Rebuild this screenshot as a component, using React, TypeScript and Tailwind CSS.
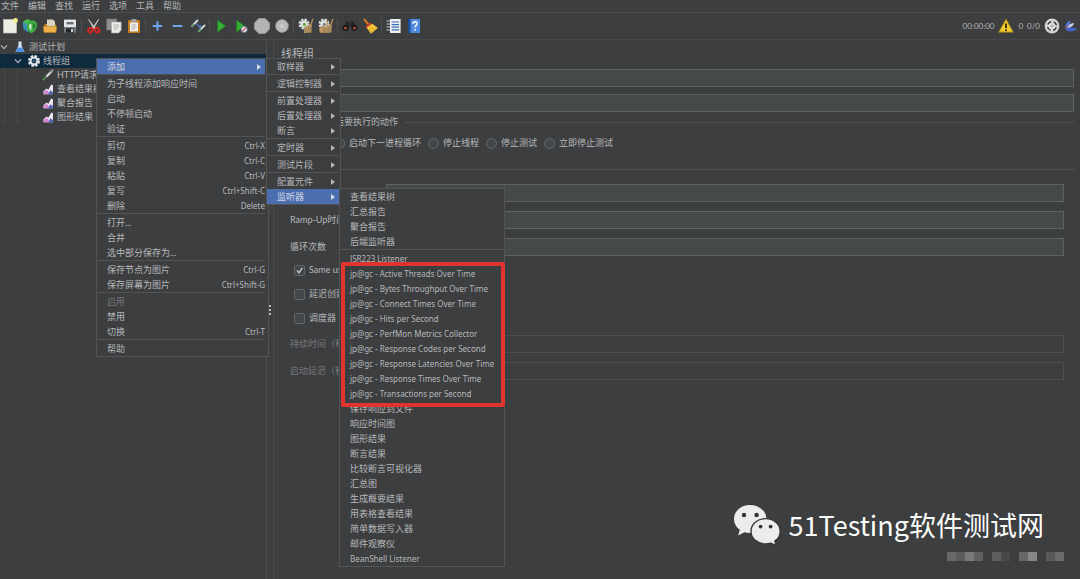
import React from 'react';

type MenuEntry =
  | { label: string; shortcut?: string; submenu?: boolean; active?: boolean; disabled?: boolean }
  | 'separator';

const menuBar = ['文件', '编辑', '查找', '运行', '选项', '工具', '帮助'];

const contextMenu: MenuEntry[] = [
  { label: '添加', submenu: true, active: true },
  'separator',
  { label: '为子线程添加响应时间' },
  { label: '启动' },
  { label: '不停顿启动' },
  { label: '验证' },
  'separator',
  { label: '剪切', shortcut: 'Ctrl-X' },
  { label: '复制', shortcut: 'Ctrl-C' },
  { label: '粘贴', shortcut: 'Ctrl-V' },
  { label: '复写', shortcut: 'Ctrl+Shift-C' },
  { label: '删除', shortcut: 'Delete' },
  'separator',
  { label: '打开...' },
  { label: '合并' },
  { label: '选中部分保存为...' },
  'separator',
  { label: '保存节点为图片', shortcut: 'Ctrl-G' },
  { label: '保存屏幕为图片', shortcut: 'Ctrl+Shift-G' },
  'separator',
  { label: '启用', disabled: true },
  { label: '禁用' },
  { label: '切换', shortcut: 'Ctrl-T' },
  'separator',
  { label: '帮助' },
];

const addMenu: MenuEntry[] = [
  { label: '取样器', submenu: true },
  'separator',
  { label: '逻辑控制器', submenu: true },
  'separator',
  { label: '前置处理器', submenu: true },
  { label: '后置处理器', submenu: true },
  { label: '断言', submenu: true },
  'separator',
  { label: '定时器', submenu: true },
  'separator',
  { label: '测试片段', submenu: true },
  'separator',
  { label: '配置元件', submenu: true },
  { label: '监听器', submenu: true, active: true },
];

const listenerMenu: MenuEntry[] = [
  { label: '查看结果树' },
  { label: '汇总报告' },
  { label: '聚合报告' },
  { label: '后端监听器' },
  'separator',
  { label: 'JSR223 Listener' },
  { label: 'jp@gc - Active Threads Over Time' },
  { label: 'jp@gc - Bytes Throughput Over Time' },
  { label: 'jp@gc - Connect Times Over Time' },
  { label: 'jp@gc - Hits per Second' },
  { label: 'jp@gc - PerfMon Metrics Collector' },
  { label: 'jp@gc - Response Codes per Second' },
  { label: 'jp@gc - Response Latencies Over Time' },
  { label: 'jp@gc - Response Times Over Time' },
  { label: 'jp@gc - Transactions per Second' },
  { label: '保存响应到文件' },
  { label: '响应时间图' },
  { label: '图形结果' },
  { label: '断言结果' },
  { label: '比较断言可视化器' },
  { label: '汇总图' },
  { label: '生成概要结果' },
  { label: '用表格查看结果' },
  { label: '简单数据写入器' },
  { label: '邮件观察仪' },
  { label: 'BeanShell Listener' },
];

const Icon = ({ children, className = 'h-4 w-4' }: { children: React.ReactNode; className?: string }) => (
  <svg viewBox="0 0 16 16" className={`${className} shrink-0`} aria-hidden="true">
    {children}
  </svg>
);

const NewIcon = () => (
  <Icon>
    <rect x="1.5" y="1.5" width="13" height="13.5" fill="#efeee6" stroke="#c9c9c0" strokeWidth="0.6" />
    <circle cx="13.5" cy="2.5" r="2.4" fill="#f2ef8a" />
  </Icon>
);

const TemplatesIcon = () => (
  <Icon>
    <path d="M0.8 4 L5 1.6 L9 3.4 V12 L5.4 14 L1.4 11z" fill="#3c8fb4" />
    <path d="M1 4 Q3 1 7 1.4 L9 4 L5 6z" fill="#4cc04a" />
    <path d="M5 5.4 Q7.4 1.6 11 2.4 Q15.4 3 15 8 Q14.4 13.4 9.4 15.2 Q5 13.6 5 9z" fill="#3fae45" />
    <path d="M7 7 Q8.2 5 9.6 6.6 L9.2 12.6 Q7.2 11.4 7 7z" fill="#d3f3cb" />
    <path d="M11 5.4 Q13.4 5 13.2 8 Q12.8 11 11.2 12z" fill="#2a7a34" />
  </Icon>
);

const OpenIcon = () => (
  <Icon>
    <path d="M5 1.4 H11 L13 3.4 V9 H5z" fill="#d9d3c2" />
    <path d="M2.6 6 H5 V9 H13 V6.6 H14 V10 H2.6z" fill="#c98b26" />
    <path d="M1.2 8.4 H14.8 L14 14.4 H2z" fill="#efb24a" stroke="#b67d20" strokeWidth="0.6" />
  </Icon>
);

const SaveIcon = () => (
  <Icon>
    <path d="M2 1.6 H14 V9 H2z" fill="#e4e6e8" />
    <rect x="4.5" y="4" width="7" height="2.4" fill="#6a6f74" />
    <path d="M2 9 H14 V14.6 H2z" fill="#707881" />
    <rect x="4" y="10.4" width="7.6" height="4.2" fill="#24282c" />
    <rect x="9" y="11" width="2" height="3" fill="#cfd3d6" />
  </Icon>
);

const CutIcon = () => (
  <Icon>
    <path d="M2.6 1.4 L9.6 10.5 L8 11z" fill="#e9e9e9" stroke="#bcbcbc" strokeWidth="0.9" />
    <path d="M12.6 1.4 L6 10.5 L7.4 11z" fill="#c4c8cb" stroke="#bcbcbc" strokeWidth="0.9" />
    <ellipse cx="4.4" cy="12.2" rx="2" ry="2.4" fill="none" stroke="#d3241d" strokeWidth="2" transform="rotate(35 4.4 12.2)" />
    <ellipse cx="11.2" cy="12.2" rx="2" ry="2.4" fill="none" stroke="#d3241d" strokeWidth="2" transform="rotate(-35 11.2 12.2)" />
  </Icon>
);

const CopyIcon = () => (
  <Icon>
    <rect x="0.8" y="1" width="10" height="11" fill="#8e9091" stroke="#76797a" strokeWidth="0.6" />
    <path d="M5.5 4 H15.2 V12 L12.8 15 H5.5z" fill="#ecece8" stroke="#a9a9a5" strokeWidth="0.6" />
    <path d="M7.5 7 H13 M7.5 9 H13 M7.5 11 H11.5" stroke="#a4a6a7" strokeWidth="0.8" />
  </Icon>
);

const PasteIcon = () => (
  <Icon>
    <rect x="2" y="2" width="12" height="13" rx="1" fill="#c47d1f" />
    <rect x="4" y="4.4" width="8" height="9" fill="#f1f1ec" />
    <rect x="5.5" y="1" width="5" height="3" rx="0.8" fill="#9da1a4" />
    <path d="M5.5 7 H10.5 M5.5 9 H10.5 M5.5 11 H9" stroke="#9c9fa2" strokeWidth="0.8" />
  </Icon>
);

const PlusIcon = () => (
  <Icon>
    <path d="M7.5 3.2 V12.8 M2.7 8 H12.3" stroke="#6fa4ea" strokeWidth="2" />
  </Icon>
);

const MinusIcon = () => (
  <Icon>
    <path d="M2.7 8 H12.3" stroke="#6fa4ea" strokeWidth="2" />
  </Icon>
);

const ToggleIcon = () => (
  <Icon>
    <path d="M1.5 8.5 L8 2" stroke="#d8dcd8" strokeWidth="1.8" />
    <path d="M1.2 8.8 L4 6" stroke="#4f8c52" strokeWidth="1.6" />
    <path d="M8.5 13.5 L15 7" stroke="#d8dcd8" strokeWidth="1.8" />
    <path d="M8.2 13.8 L11 11" stroke="#4f8c52" strokeWidth="1.6" />
    <path d="M6 5.5 L11 9.5 M11 9.5 L8.6 9.2 M11 9.5 L10.6 7.2" stroke="#4d79cf" strokeWidth="1.2" fill="none" />
  </Icon>
);

const RunIcon = () => (
  <Icon>
    <path d="M3.6 2.2 L11.6 8 L3.6 14z" fill="#35b035" stroke="#1f7d22" strokeWidth="0.8" />
  </Icon>
);

const RunNoTimersIcon = () => (
  <Icon>
    <path d="M2.6 2.2 L10.6 8 L2.6 14z" fill="#35b035" stroke="#1f7d22" strokeWidth="0.8" />
    <circle cx="10.2" cy="11.4" r="3" fill="#e6eaf0" stroke="#6f82aa" strokeWidth="1" />
    <path d="M8.4 13.2 L12 9.6" stroke="#cf4038" strokeWidth="1.2" />
  </Icon>
);

const StopIcon = () => (
  <Icon>
    <path d="M5 0.3 H11 L15.7 5 V11 L11 15.7 H5 L0.3 11 V5z" fill="#b3b3b3" stroke="#989898" strokeWidth="0.6" />
  </Icon>
);

const ShutdownIcon = () => (
  <Icon>
    <circle cx="8" cy="8" r="6.4" fill="#b9b9b9" stroke="#9c9c9c" strokeWidth="0.6" />
    <path d="M6 6 L10 10 M10 6 L6 10" stroke="#cdcdcd" strokeWidth="1.4" />
  </Icon>
);

// gear swept by a hand-sized brush; the "all" variant has a second brush
const ClearIcon = ({ all }: { all?: boolean }) => (
  <Icon>
    <circle cx="6" cy="6" r="4.2" fill="none" stroke="#dfe2df" strokeWidth="2.6" strokeDasharray="2.2 1.1" />
    <circle cx="6" cy="6" r="3.6" fill="#dfe2df" />
    <circle cx="6.4" cy="6.4" r="1.6" fill={all ? '#7d8280' : '#5fae3e'} />
    <path d="M14.8 0.8 L12.6 8" stroke="#b08a55" strokeWidth="1.4" />
    <path d="M6.4 9 L10 7 L13.6 6.6 L13.4 14.6 L6 15z" fill="#bd9c6c" />
    <path d="M8.4 10 L7.6 14.6 M10.4 9 L10 14.6 M12.2 8.6 L12 14.4" stroke="#8b6b3c" strokeWidth="0.7" />
    {all && <path d="M1.5 10 L5.6 8 L5.8 14.6 L2 14.6z M10 1.6 L8.8 8" fill="#bd9c6c" stroke="#a98149" strokeWidth="0.9" />}
  </Icon>
);

const SearchIcon = () => (
  <Icon>
    <path d="M4.5 3.6 L6.5 3 L7.4 9 H2z M11.5 3.6 L9.5 3 L8.6 9 H14z" fill="#202224" />
    <rect x="6.5" y="5" width="3" height="3" fill="#2c2f31" />
    <circle cx="3.5" cy="10" r="3" fill="#161718" />
    <circle cx="12.5" cy="10" r="3" fill="#161718" />
    <circle cx="3.5" cy="10.2" r="1.4" fill="#a5532f" />
    <circle cx="12.5" cy="10.2" r="1.4" fill="#a5532f" />
  </Icon>
);

const BroomIcon = () => (
  <Icon>
    <path d="M2 0.8 L6.4 6.4" stroke="#d9761f" strokeWidth="2" />
    <path d="M3.6 8.2 L8.6 4.4 L10.4 6.4 L5.2 10.4z" fill="#cc3a2c" />
    <path d="M4.6 9.8 L10.2 5.8 L15.8 10 L9 15.8z" fill="#f2c53a" />
    <path d="M6.8 10.8 L10.2 14 M9 9.2 L12.6 12.4" stroke="#b98613" strokeWidth="0.7" />
  </Icon>
);

const FunctionIcon = () => (
  <Icon>
    <rect x="2" y="1" width="12.6" height="14" fill="#eef0f2" />
    <rect x="1" y="1" width="3" height="14" fill="#33363a" />
    <path d="M0.6 3 H4 M0.6 6 H4 M0.6 9 H4 M0.6 12 H4" stroke="#d5d8da" strokeWidth="1" />
    <path d="M5.6 4 H13 M5.6 6.6 H13 M5.6 9.2 H13 M5.6 11.8 H13" stroke="#3d6fb8" strokeWidth="1.2" />
  </Icon>
);

const HelpIcon = () => (
  <Icon>
    <rect x="2" y="1" width="12" height="14" fill="#4d8ce0" />
    <rect x="2" y="1" width="2.6" height="14" fill="#1d4f99" />
    <path d="M6.9 5.9 Q7 3.8 9.1 3.8 Q11.2 3.9 11.1 5.8 Q11 7 9.8 7.7 Q9.1 8.2 9.1 9.6" fill="none" stroke="#fff" strokeWidth="1.4" />
    <circle cx="9.1" cy="11.8" r="0.9" fill="#fff" />
  </Icon>
);

const WarningIcon = () => (
  <Icon>
    <path d="M8 1 L15.4 14.2 H0.6z" fill="#f1cd2c" stroke="#8f7720" strokeWidth="1" />
    <path d="M8 5.4 V10.2" stroke="#33290a" strokeWidth="1.8" />
    <circle cx="8" cy="12.2" r="1" fill="#33290a" />
  </Icon>
);

const RemoteIcon = () => (
  <Icon>
    <circle cx="8" cy="8" r="7.4" fill="#d3d3d1" />
    <circle cx="8" cy="8" r="4.4" fill="#e9e9e7" stroke="#3b3d3f" strokeWidth="1.5" strokeDasharray="4.4 2.51" strokeDashoffset="-1.25" />
    <path d="M8 5.4 V10.6 M5.4 8 H10.6" stroke="#a3a5a5" strokeWidth="1" />
  </Icon>
);

const FeatherIcon = () => (
  <Icon className="h-3.5 w-3.5">
    <path d="M1.4 10 Q1 4 7.4 1.6 Q7.6 4.2 5.6 7z" fill="#5c78d6" />
    <path d="M2 11.6 Q5 5.2 11.6 4.6 Q10.6 8.6 5 10.8z" fill="#c6d4f6" />
    <path d="M1.4 11 Q6 8.6 15 11 Q11 15.4 3.4 13.8z" fill="#4763cb" />
    <path d="M2 10.4 L5 8.2" stroke="#b14a5c" strokeWidth="1.2" />
  </Icon>
);

const toolGroups = [
  [
    { name: '新建', icon: <NewIcon /> },
    { name: '模板', icon: <TemplatesIcon /> },
    { name: '打开', icon: <OpenIcon /> },
    { name: '保存', icon: <SaveIcon /> },
  ],
  [
    { name: '剪切', icon: <CutIcon /> },
    { name: '复制', icon: <CopyIcon /> },
    { name: '粘贴', icon: <PasteIcon /> },
  ],
  [
    { name: '展开', icon: <PlusIcon /> },
    { name: '折叠', icon: <MinusIcon /> },
    { name: '切换', icon: <ToggleIcon /> },
  ],
  [
    { name: '启动', icon: <RunIcon /> },
    { name: '不停顿启动', icon: <RunNoTimersIcon /> },
    { name: '停止', icon: <StopIcon /> },
    { name: '关闭', icon: <ShutdownIcon /> },
  ],
  [
    { name: '清除', icon: <ClearIcon /> },
    { name: '清除全部', icon: <ClearIcon all /> },
  ],
  [
    { name: '查找', icon: <SearchIcon /> },
    { name: '重置搜索', icon: <BroomIcon /> },
  ],
  [
    { name: '函数助手', icon: <FunctionIcon /> },
    { name: '帮助', icon: <HelpIcon /> },
  ],
];

const Chevron = () => (
  <svg viewBox="0 0 8 8" className="h-2 w-2 shrink-0" aria-hidden="true">
    <path d="M1 2.4 L4 5.6 L7 2.4" fill="none" stroke="#b4b6b8" strokeWidth="1.2" />
  </svg>
);

const FlaskIcon = () => (
  <Icon className="h-3 w-3">
    <path d="M6 0.6 H10 V6 L14 14.6 H2 L6 6z" fill="#d6e6f7" />
    <path d="M5 8.6 H11 L14 14.8 H2z" fill="#4a8fe0" />
  </Icon>
);

const GearIcon = () => (
  <Icon className="h-3 w-3">
    <circle cx="8" cy="8" r="6" fill="none" stroke="#e2e6ea" strokeWidth="4" strokeDasharray="3 1.71" />
    <circle cx="8" cy="8" r="4.6" fill="none" stroke="#e2e6ea" strokeWidth="2.6" />
    <circle cx="8" cy="8" r="2.4" fill="#35597a" />
  </Icon>
);

const PipetteIcon = () => (
  <Icon className="h-3 w-3">
    <path d="M1 15 L9 7" stroke="#5c9a5d" strokeWidth="2.2" />
    <path d="M6 10 L13 3" stroke="#d3d6d2" strokeWidth="3" />
    <path d="M11 4.6 L15 1" stroke="#8c9090" strokeWidth="3" />
  </Icon>
);

const GraphIcon = () => (
  <Icon className="h-3 w-3">
    <path d="M2 15 V11 L6 7.4 L8.4 9 L12.4 2 L14.6 3 V15z" fill="#f2e6f3" />
    <path d="M2 15 V12 L6 9 L8.4 11.4 L9.4 15z" fill="#d387cf" />
    <path d="M8 15 L11 9.6 L14.6 12 V15z" fill="#5568b8" />
  </Icon>
);

const treeLeaves = [
  { label: 'HTTP请求', icon: <PipetteIcon /> },
  { label: '查看结果树', icon: <GraphIcon /> },
  { label: '聚合报告', icon: <GraphIcon /> },
  { label: '图形结果', icon: <GraphIcon /> },
];

const MenuText = ({ children }: { children: string }) => (
  <span className={/^[\x20-\x7e]+$/.test(children) ? "font-['Noto_Sans',sans-serif] text-[8px] leading-3" : ''}>
    {children}
  </span>
);

const Menu = ({ entries, className }: { entries: MenuEntry[]; className: string }) => (
  <div role="menu" className={`absolute border border-[#515355] bg-[#3c3e40] ${className}`}>
    {entries.map((entry, index) => {
      if (entry === 'separator') {
        return <div key={index} role="separator" className="h-0.5 border-t border-[#515355]" />;
      }
      return (
        <button
          key={index}
          role="menuitem"
          disabled={entry.disabled}
          className={`flex h-[15px] w-full items-center justify-between pl-2.5 whitespace-nowrap ${
            entry.active ? 'bg-[#4b6eaf] text-[#d5dae3]' : ''
          } ${entry.disabled ? 'text-[#777]' : ''} ${entry.submenu ? 'pr-1' : ''}`}
        >
          <MenuText>{entry.label}</MenuText>
          {entry.shortcut && <MenuText>{entry.shortcut}</MenuText>}
          {entry.submenu && (
            <svg viewBox="0 0 4 6" className="h-1.5 w-1" aria-hidden="true">
              <path d="M0 0 L4 3 L0 6z" fill="currentColor" />
            </svg>
          )}
        </button>
      );
    })}
  </div>
);

const Radio = ({ label }: { label: string }) => (
  <label className="flex items-center gap-1 whitespace-nowrap">
    <input
      type="radio"
      name="on-error"
      className="h-[11px] w-[11px] shrink-0 appearance-none rounded-full border border-[#626769] bg-[#43474a]"
    />
    {label}
  </label>
);

const Check = ({ label, checked }: { label: string; checked?: boolean }) => (
  <label className="relative flex h-6 items-center gap-1 pl-1 whitespace-nowrap">
    <input
      type="checkbox"
      defaultChecked={checked}
      className="peer h-[11px] w-[11px] shrink-0 appearance-none rounded-xs border border-[#606466] bg-[#43474a]"
    />
    <svg viewBox="0 0 11 11" className="absolute left-1 hidden h-[11px] w-[11px] peer-checked:block" aria-hidden="true">
      <path d="M3 5.4 L4.9 7.8 L8.4 2.8" fill="none" stroke="#c8cacb" strokeWidth="1.4" />
    </svg>
    {label}
  </label>
);

const Field = ({ id, label, disabled }: { id: string; label: string; disabled?: boolean }) => (
  <div className={`flex h-[18px] items-center ${disabled ? 'text-[#77797b]' : ''}`}>
    <label htmlFor={id} className="w-24 shrink-0 whitespace-nowrap">
      {label}
    </label>
    <input
      id={id}
      disabled={disabled}
      className={`h-full min-w-0 flex-1 border px-1 ${
        disabled ? 'border-[#4c4f51] bg-transparent' : 'border-[#5e6264] bg-[#45494a]'
      }`}
    />
  </div>
);

const WeChatLogo = () => (
  <svg viewBox="0 0 48 44" className="h-11 w-12 shrink-0" aria-hidden="true">
    <path
      d="M17 2 C8 2 1 8 1 16 C1 20.4 3.2 24.2 6.8 26.8 L5.2 32.4 L11.4 29.2 Q14 30 17 30 C26 30 33.4 24 33.4 16 C33.4 8 26 2 17 2z"
      fill="#ececec"
    />
    <circle cx="11" cy="12" r="2.2" fill="#333" />
    <circle cx="23.6" cy="12" r="2.2" fill="#333" />
    <path
      d="M32.6 15.6 C24.6 15.6 18 21 18 28.4 C18 35.6 24.6 41 32.6 41 Q35.4 41 37.8 40.2 L43.2 42.6 L41.8 38 C45.2 35.8 47.2 32.4 47.2 28.4 C47.2 21 40.6 15.6 32.6 15.6z"
      fill="#ececec"
      stroke="#333537"
      strokeWidth="1.4"
    />
    <circle cx="27.6" cy="23.6" r="1.9" fill="#333" />
    <circle cx="37.6" cy="23.6" r="1.9" fill="#333" />
  </svg>
);

const mosaic = [
  'bg-[#666769]',
  'bg-[#5b5c5e]',
  'bg-[#78797a]',
  'bg-[#606163]',
  '',
  'bg-[#5e5f61]',
  'bg-[#48494b]',
  '',
  'bg-[#666769]',
  'bg-[#868788]',
  '',
  'bg-[#58595b]',
  'bg-[#6a6b6d]',
];

export default function App() {
  return (
    <div className="relative flex min-h-screen flex-col overflow-hidden bg-[#3c3e40] font-['Lato','Noto_Sans_CJK_SC',sans-serif] text-[9px] leading-3 text-[#b6b8ba]">
      <nav className="flex gap-[9px] border-b border-[#4b4d4f] pl-px">
        {menuBar.map((item) => (
          <button key={item}>{item}</button>
        ))}
      </nav>

      <header className="flex h-[27px] items-center border-b border-[#46484a]">
        {toolGroups.map((group, index) => (
          <React.Fragment key={index}>
            {index > 0 && <div className="mr-0.5 ml-px h-4 w-px bg-[#4c4e50]" />}
            {group.map((tool) => (
              <button key={tool.name} aria-label={tool.name} className="flex w-5 justify-center">
                {tool.icon}
              </button>
            ))}
          </React.Fragment>
        ))}
        <div className="ml-auto flex items-center gap-1 pr-0.5 text-[8px]">
          <span>00:00:00</span>
          <WarningIcon />
          <span>0</span>
          <span>0/0</span>
          <RemoteIcon />
          <FeatherIcon />
        </div>
      </header>

      <div className="flex flex-1">
        <aside className="w-[266px] shrink-0">
          <button className="flex h-3.5 w-full items-center">
            <Chevron />
            <span className="flex items-center gap-[3px] pl-1.5">
              <FlaskIcon />
              测试计划
            </span>
          </button>
          <button className="flex h-3.5 w-full items-center bg-[#0f293d] pl-3.5">
            <Chevron />
            <span className="flex items-center gap-[3px] pl-1.5">
              <GearIcon />
              线程组
            </span>
          </button>
          <ul className="ml-1 border-l border-[#46484a]">
            {treeLeaves.map((leaf) => (
              <li key={leaf.label} className="ml-3 border-l border-[#46484a] pl-6">
                <button className="flex h-3.5 items-center gap-[3px] whitespace-nowrap">
                  {leaf.icon}
                  {leaf.label}
                </button>
              </li>
            ))}
          </ul>
        </aside>

        <div className="flex w-2 shrink-0 flex-col items-center justify-center gap-0.5 border-x border-[#4b4d4f]">
          <span className="h-0.5 w-0.5 bg-[#b6b8ba]" />
          <span className="h-0.5 w-0.5 bg-[#b6b8ba]" />
          <span className="h-0.5 w-0.5 bg-[#b6b8ba]" />
        </div>

        <main className="min-w-0 flex-1 pt-1.5 pr-1.5 pl-[7px]">
          <h1 className="text-[11px] leading-4">线程组</h1>
          <div className="flex flex-col gap-[7px] pt-[7px] pl-9">
            <input aria-label="名称" className="h-[18px] w-full border border-[#5e6264] bg-[#45494a] px-1" />
            <input aria-label="注释" className="h-[18px] w-full border border-[#5e6264] bg-[#45494a] px-1" />
          </div>

          <section className="pt-1">
            <div className="flex h-3 items-center gap-1.5">
              <h2 className="whitespace-nowrap">在取样器错误后要执行的动作</h2>
              <div className="h-px flex-1 bg-[#4e5153]" />
            </div>
            <div className="flex items-center gap-[7px] pt-[9px] pb-5 pl-[53px]">
              <Radio label="启动下一进程循环" />
              <Radio label="停止线程" />
              <Radio label="停止测试" />
              <Radio label="立即停止测试" />
            </div>
          </section>

          <section aria-label="线程属性" className="border-t border-[#4e5153]">
            <div className="flex flex-col gap-[9px] pt-3.5 pr-2.5 pl-[9px]">
              <input
                aria-label="线程数"
                className="ml-24 h-[18px] min-w-0 border border-[#5e6264] bg-[#45494a] px-1"
              />
              <Field id="ramp-up" label="Ramp-Up时间（秒）" />
              <Field id="loops" label="循环次数" />
            </div>
            <div className="pt-0.5 pb-[5px] pl-[9px]">
              <Check label="Same user on each iteration" checked />
              <Check label="延迟创建线程直到需要" />
              <Check label="调度器" />
            </div>
            <div className="flex flex-col gap-[9px] pr-2.5 pl-[9px]">
              <Field id="duration" label="持续时间（秒）" disabled />
              <Field id="delay" label="启动延迟（秒）" disabled />
            </div>
          </section>
        </main>
      </div>

      <Menu entries={contextMenu} className="top-[58px] left-24 w-[173px] pr-[3px]" />
      <Menu entries={addMenu} className="top-[58px] left-[266px] w-[75px] pr-px" />
      <Menu entries={listenerMenu} className="top-[188px] left-[339px] w-[166px]" />

      {/* frame round the jp@gc plugins */}
      <div className="pointer-events-none absolute top-[262px] left-[341px] h-[145px] w-[164px] rounded-xs border-4 border-[#e0352f]" />

      <div className="absolute right-9 bottom-8 flex items-center gap-2 font-['Noto_Sans_CJK_SC',sans-serif] text-[27px] leading-10 text-white">
        <WeChatLogo />
        <span>51Testing软件测试网</span>
      </div>
      <div className="absolute right-4 bottom-[18px] flex" aria-hidden="true">
        {mosaic.map((color, index) => (
          <span key={index} className={`h-[9px] w-[9px] ${color}`} />
        ))}
      </div>
    </div>
  );
}
